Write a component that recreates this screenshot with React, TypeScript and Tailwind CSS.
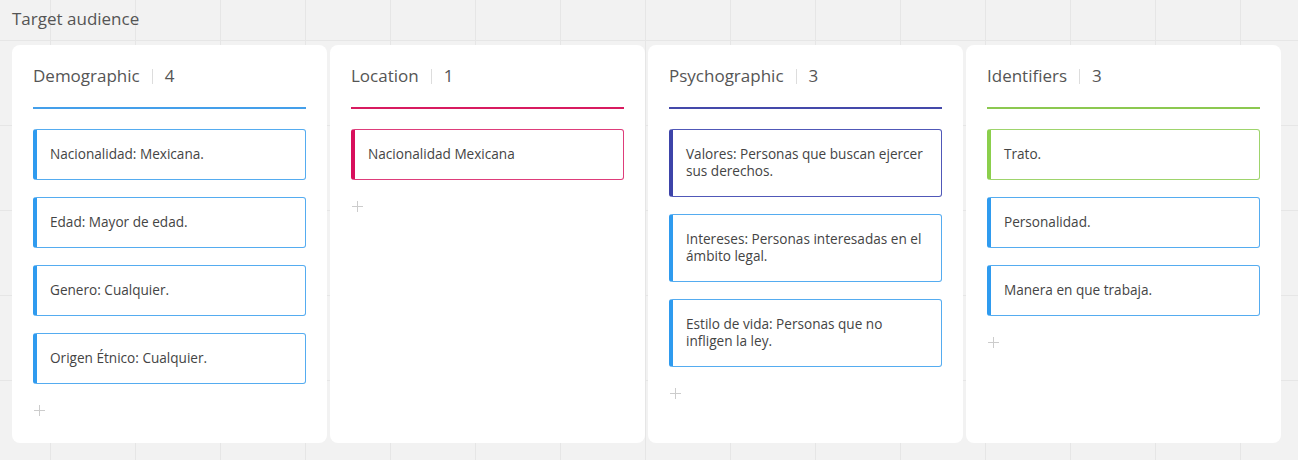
import React from "react";

type Card = { text: string; tone: "blue" | "pink" | "indigo" | "green" };

type Column = {
  title: string;
  line: string;
  cards: Card[];
};

const tones: Record<Card["tone"], string> = {
  blue: "border-[#55acf0] border-l-[#2f9bef]",
  pink: "border-[#de3c7a] border-l-[#d80f5c]",
  indigo: "border-[#5058b8] border-l-[#3d44a9]",
  green: "border-[#9ed46c] border-l-[#8bcf4c]",
};

const columns: Column[] = [
  {
    title: "Demographic",
    line: "bg-[#449fea]",
    cards: [
      { text: "Nacionalidad: Mexicana.", tone: "blue" },
      { text: "Edad: Mayor de edad.", tone: "blue" },
      { text: "Genero: Cualquier.", tone: "blue" },
      { text: "Origen Étnico: Cualquier.", tone: "blue" },
    ],
  },
  {
    title: "Location",
    line: "bg-[#d81b60]",
    cards: [{ text: "Nacionalidad Mexicana", tone: "pink" }],
  },
  {
    title: "Psychographic",
    line: "bg-[#4449aa]",
    cards: [
      { text: "Valores: Personas que buscan ejercer sus derechos.", tone: "indigo" },
      { text: "Intereses: Personas interesadas en el ámbito legal.", tone: "blue" },
      { text: "Estilo de vida: Personas que no infligen la ley.", tone: "blue" },
    ],
  },
  {
    title: "Identifiers",
    line: "bg-[#8cc850]",
    cards: [
      { text: "Trato.", tone: "green" },
      { text: "Personalidad.", tone: "blue" },
      { text: "Manera en que trabaja.", tone: "blue" },
    ],
  },
];

function PlusIcon() {
  return (
    <svg width="11" height="11" viewBox="0 0 11 11" className="block">
      <path d="M5.5 0v11M0 5.5h11" stroke="#cccccc" strokeWidth="1" />
    </svg>
  );
}

export default function App() {
  return (
    <div
      className="h-[460px] w-full overflow-hidden bg-[#f2f2f2] bg-[linear-gradient(to_right,#e6e6e6_1px,transparent_1px),linear-gradient(to_bottom,#e6e6e6_1px,transparent_1px)] bg-[size:85px_85px] bg-[position:50px_40px]"
      style={{ fontFamily: '"Open Sans", "Liberation Sans", sans-serif' }}
    >
      <div className="px-3 pt-[8px] text-[17px] leading-[22px] text-[#555]">Target audience</div>

      <div className="mt-[15px] flex gap-[3px] pl-3">
        {columns.map((col) => (
          <div key={col.title} className="h-[398px] w-[315px] shrink-0 rounded-lg bg-white px-[21px] pt-[20px]">
            <div className="flex items-center text-[17px] leading-[22px] text-[#555]">
              <span>{col.title}</span>
              <span className="mx-[12px] h-[15px] w-px bg-[#dddddd]" />
              <span>{col.cards.length}</span>
            </div>
            <div className={`mt-[20px] h-[2px] ${col.line}`} />

            <div className="mt-[20px] flex flex-col gap-[17px]">
              {col.cards.map((card) => (
                <div
                  key={card.text}
                  className={`rounded-[3px] border border-l-4 bg-white pb-[17px] pl-[13px] pr-[12px] pt-[15px] text-[13.6px] leading-[17px] text-[#444] ${tones[card.tone]}`}
                >
                  {card.text}
                </div>
              ))}
            </div>

            <div className="mt-[21px] pl-px">
              <PlusIcon />
            </div>
          </div>
        ))}
      </div>
    </div>
  );
}
